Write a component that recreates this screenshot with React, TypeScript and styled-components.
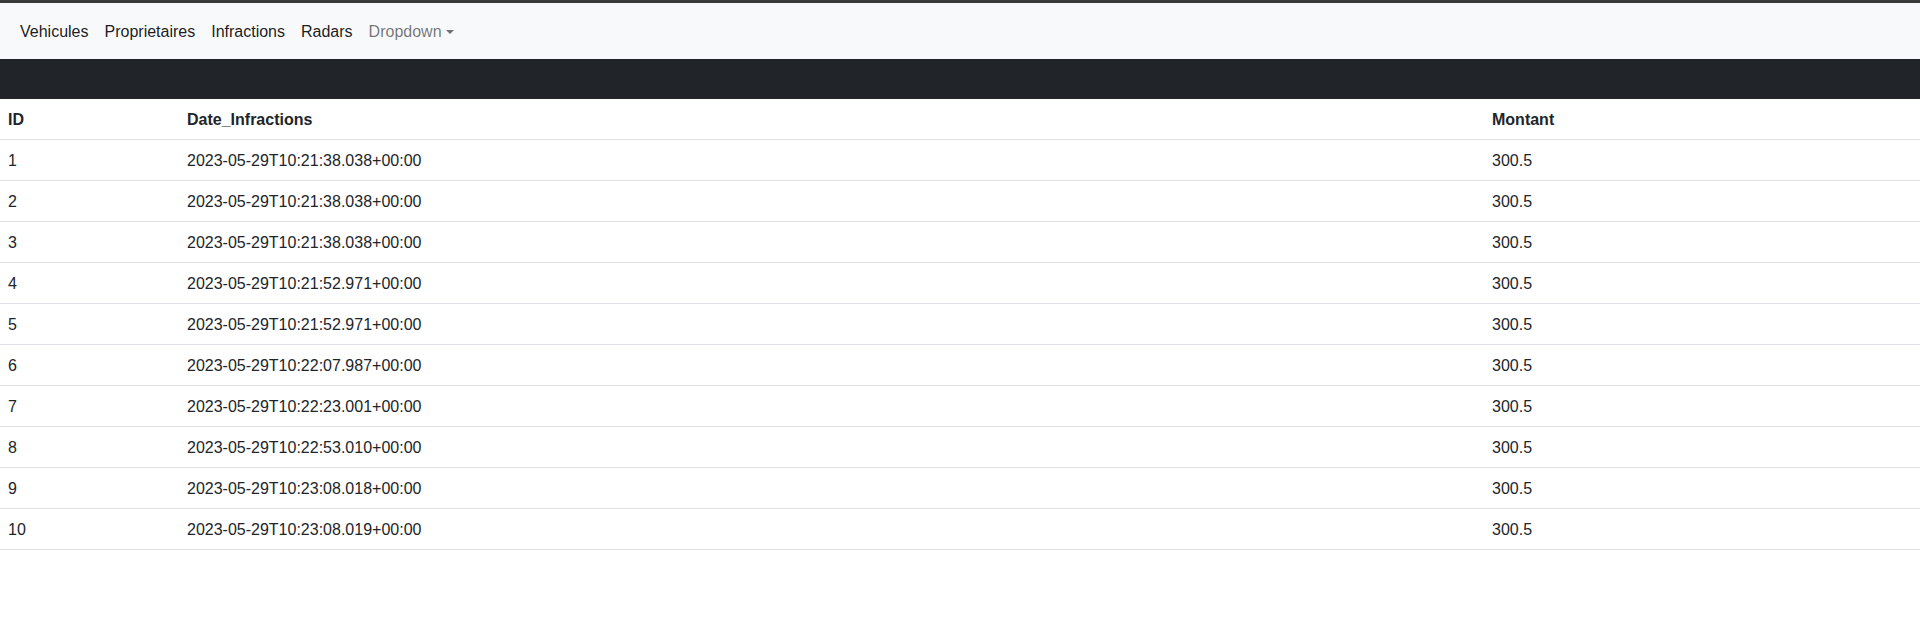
import React from "react";
import styled, { createGlobalStyle } from "styled-components";

const GlobalStyle = createGlobalStyle`
  *, *::before, *::after { box-sizing: border-box; }
  html, body { margin: 0; padding: 0; background: #fff; }
  body {
    font-family: "Segoe UI", "Liberation Sans", Arial, sans-serif;
    font-size: 16px;
    line-height: 1.5;
    color: #212529;
  }
`;

const Page = styled.div`
  display: flex;
  flex-direction: column;
  border-top: 3px solid #3a3a3a;
`;

const Navbar = styled.nav`
  background: #f8f9fa;
  padding: 8px 12px;
  display: flex;
  align-items: center;
`;

const NavList = styled.ul`
  list-style: none;
  margin: 0;
  padding: 0;
  display: flex;
`;

const NavLink = styled.a<{ $muted?: boolean }>`
  display: flex;
  align-items: center;
  padding: 9px 8px 7px;
  text-decoration: none;
  color: ${(p) => (p.$muted ? "rgba(0,0,0,0.55)" : "rgba(0,0,0,0.9)")};
  cursor: pointer;
`;

const Caret = styled.span`
  display: inline-block;
  margin-left: 0.255em;
  border-top: 0.3em solid currentColor;
  border-right: 0.3em solid transparent;
  border-left: 0.3em solid transparent;
  border-bottom: 0;
  vertical-align: 0.255em;
`;

const DarkBar = styled.div`
  height: 40px;
  background: #212529;
`;

const Table = styled.table`
  width: 100%;
  border-collapse: collapse;
  table-layout: fixed;
`;

const HeadCell = styled.th<{ $w?: number }>`
  text-align: left;
  font-weight: 700;
  padding: 9px 8px 7px;
  border-bottom: 1px solid #dee2e6;
  ${(p) => (p.$w ? `width: ${p.$w}px;` : "")}
`;

const Cell = styled.td`
  padding: 9px 8px 7px;
  border-bottom: 1px solid #dee2e6;
`;

const rows: [number, string][] = [
  [1, "2023-05-29T10:21:38.038+00:00"],
  [2, "2023-05-29T10:21:38.038+00:00"],
  [3, "2023-05-29T10:21:38.038+00:00"],
  [4, "2023-05-29T10:21:52.971+00:00"],
  [5, "2023-05-29T10:21:52.971+00:00"],
  [6, "2023-05-29T10:22:07.987+00:00"],
  [7, "2023-05-29T10:22:23.001+00:00"],
  [8, "2023-05-29T10:22:53.010+00:00"],
  [9, "2023-05-29T10:23:08.018+00:00"],
  [10, "2023-05-29T10:23:08.019+00:00"],
];

export default function App() {
  return (
    <>
      <GlobalStyle />
      <Page>
        <Navbar>
          <NavList>
            <li><NavLink>Vehicules</NavLink></li>
            <li><NavLink>Proprietaires</NavLink></li>
            <li><NavLink>Infractions</NavLink></li>
            <li><NavLink>Radars</NavLink></li>
            <li>
              <NavLink $muted>
                Dropdown<Caret />
              </NavLink>
            </li>
          </NavList>
        </Navbar>
        <DarkBar />
        <Table>
          <thead>
            <tr>
              <HeadCell $w={179}>ID</HeadCell>
              <HeadCell $w={1305}>Date_Infractions</HeadCell>
              <HeadCell>Montant</HeadCell>
            </tr>
          </thead>
          <tbody>
            {rows.map(([id, date]) => (
              <tr key={id}>
                <Cell>{id}</Cell>
                <Cell>{date}</Cell>
                <Cell>300.5</Cell>
              </tr>
            ))}
          </tbody>
        </Table>
      </Page>
    </>
  );
}
